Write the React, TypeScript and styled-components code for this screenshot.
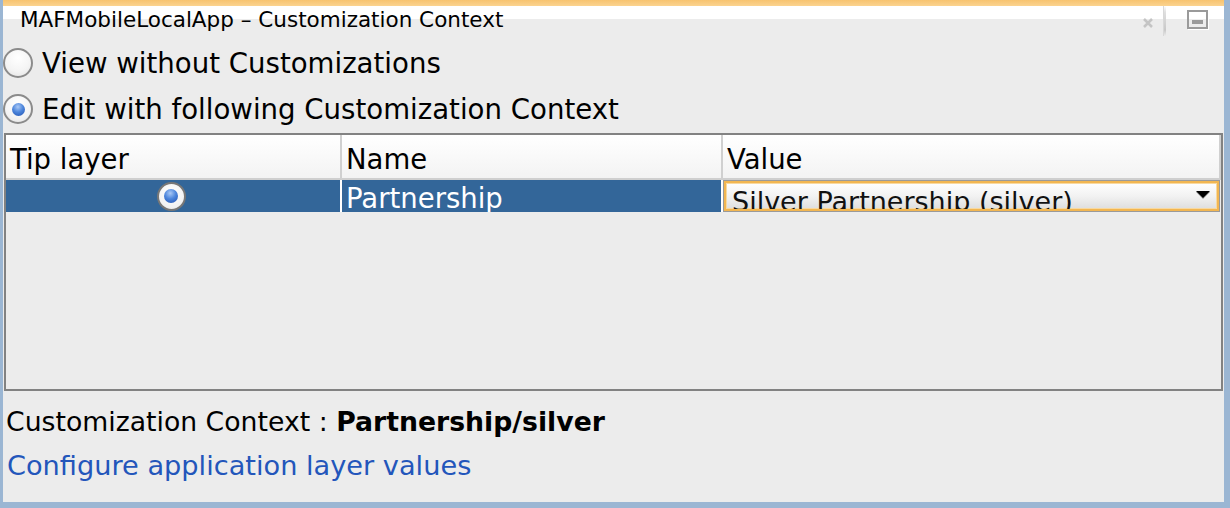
import React from "react";
import styled, { createGlobalStyle } from "styled-components";

const Global = createGlobalStyle`
  html, body { margin: 0; padding: 0; background: #ececec; }
  * { box-sizing: border-box; }
`;

const Frame = styled.div`
  width: 1230px;
  height: 508px;
  display: flex;
  flex-direction: column;
  background: #ececec;
  border-left: 3px solid #9bb6d3;
  border-right: 6px solid #9bb6d3;
  border-bottom: 6px solid #9bb6d3;
  font-family: "DejaVu Sans", "Liberation Sans", sans-serif;
  color: #000;
  overflow: hidden;
`;

const TopStripe = styled.div`
  height: 6px;
  flex: none;
  background: linear-gradient(#f7c36f, #fbd38f);
`;

const TitleBar = styled.div`
  height: 34px;
  flex: none;
  display: flex;
  align-items: flex-start;
  background: linear-gradient(#ffffff 0 13px, #ececec 13px);
  padding-left: 17px;
`;

const TitleText = styled.div`
  font-size: 21.5px;
  flex: 1;
  line-height: 26px;
  padding-top: 1px;
`;

const CloseMark = styled.div`
  width: 12px;
  height: 12px;
  margin-right: 9px;
  margin-top: 11px;
  display: flex;
`;

const Separator = styled.div`
  width: 3px;
  height: 30px;
  background: linear-gradient(#ffffff, #e0e0e0 20%, #c8c8c8 80%, #ececec);
  border-left: 1px solid #d8d8d8;
  margin-right: 21px;
`;

const MinButton = styled.div`
  width: 21px;
  height: 19px;
  border: 2px solid #9a9a9a;
  margin-right: 16px;
  margin-top: 4px;
  display: flex;
  align-items: flex-end;
  justify-content: center;
  padding-bottom: 3px;
  box-shadow: 1px 1px 0 #ffffff;
  &::after {
    content: "";
    width: 11px;
    height: 4px;
    background: #9a9a9a;
  }
`;

const OptionRow = styled.label`
  height: 46px;
  flex: none;
  display: flex;
  align-items: center;
  gap: 9px;
  font-size: 27.6px;
`;

const RadioCircle = styled.span<{ $on?: boolean }>`
  width: 30px;
  height: 30px;
  flex: none;
  border-radius: 50%;
  border: 2px solid #8b8b8b;
  background: radial-gradient(circle at 50% 30%, #ffffff 0%, #f4f4f4 60%, #e2e2e2 100%);
  display: flex;
  align-items: center;
  justify-content: center;
  &::after {
    content: "";
    display: ${(p) => (p.$on ? "block" : "none")};
    width: 13px;
    height: 13px;
    border-radius: 50%;
    background: radial-gradient(circle at 45% 30%, #a9c8f5 0%, #4d86dc 45%, #1f4fae 100%);
  }
`;

const TableBox = styled.div`
  margin: 1px 1px 0 1px;
  height: 258px;
  flex: none;
  border: 2px solid #828282;
  display: flex;
  flex-direction: column;
  background: #ececec;
`;

const Grid = styled.div`
  display: grid;
  grid-template-columns: 336px 381px 1fr;
`;

const HeadCell = styled.div`
  height: 45px;
  background: linear-gradient(#ffffff, #f3f3f3);
  border-bottom: 2px solid #cfcfcf;
  border-right: 2px solid #d0d0d0;
  font-size: 27.5px;
  display: flex;
  align-items: center;
  padding-left: 4px;
  padding-top: 5px;
  &:last-child { border-right: none; }
`;

const BodyCell = styled.div<{ $center?: boolean }>`
  height: 32px;
  background: #336699;
  color: #ffffff;
  border-right: 2px solid #ffffff;
  font-size: 27.5px;
  display: flex;
  align-items: center;
  justify-content: ${(p) => (p.$center ? "center" : "flex-start")};
  padding-left: ${(p) => (p.$center ? "0" : "4px")};
  padding-top: 3px;
  overflow: hidden;
`;

const TableRadio = styled.span`
  width: 29px;
  height: 29px;
  border-radius: 50%;
  border: 2px solid #777;
  background: radial-gradient(circle at 50% 35%, #ffffff 0%, #f2f2f2 70%, #dcdcdc 100%);
  display: flex;
  align-items: center;
  justify-content: center;
  margin-top: -3px;
  margin-right: 4px;
  &::after {
    content: "";
    width: 14px;
    height: 14px;
    border-radius: 50%;
    background: radial-gradient(circle at 45% 30%, #a9c8f5 0%, #4d86dc 45%, #1f4fae 100%);
  }
`;

const ComboCell = styled.div`
  height: 32px;
  border: 1px solid #9a9a9a;
  background: #ececec;
  display: flex;
  margin-right: 1px;
`;

const Combo = styled.div`
  flex: 1;
  border: 2px solid #f2b651;
  box-shadow: inset 0 0 0 1px #f8d9a0;
  background: linear-gradient(#ffffff, #f2f2f2 50%, #dedede);
  display: flex;
  align-items: flex-end;
  overflow: hidden;
  padding-left: 6px;
`;

const ComboText = styled.div`
  font-size: 27px;
  line-height: 27px;
  height: 24px;
  flex: 1;
  margin-bottom: -3px;
  align-self: flex-end;
  overflow: hidden;
  white-space: nowrap;
  color: #111;
`;

const Arrow = styled.div`
  align-self: center;
  margin-right: 7px;
  margin-top: -4px;
  width: 0;
  height: 0;
  border-left: 7px solid transparent;
  border-right: 7px solid transparent;
  border-top: 7px solid #000;
  filter: drop-shadow(0 1px 0 #9a9a9a);
`;

const Footer = styled.div`
  display: flex;
  flex-direction: column;
  padding-left: 3px;
  padding-top: 8px;
`;

const ContextLine = styled.div`
  font-size: 26.7px;
  height: 44px;
  display: flex;
  align-items: center;
  white-space: pre;
  b { font-weight: bold; }
`;

const Link = styled.a`
  font-size: 27.2px;
  color: #2356bb;
  text-decoration: none;
  height: 44px;
  display: flex;
  align-items: center;
  padding-left: 1px;
  cursor: pointer;
`;

export default function App() {
  return (
    <>
      <Global />
      <Frame>
        <TopStripe />
        <TitleBar>
          <TitleText>MAFMobileLocalApp – Customization Context</TitleText>
          <CloseMark>
            <svg width="12" height="12" viewBox="0 0 12 12">
              <path d="M2 2 L10 10 M10 2 L2 10" stroke="#c4c4c4" strokeWidth="2.5" />
            </svg>
          </CloseMark>
          <Separator />
          <MinButton />
        </TitleBar>
        <OptionRow>
          <RadioCircle />
          View without Customizations
        </OptionRow>
        <OptionRow>
          <RadioCircle $on />
          Edit with following Customization Context
        </OptionRow>
        <TableBox>
          <Grid>
            <HeadCell>Tip layer</HeadCell>
            <HeadCell>Name</HeadCell>
            <HeadCell>Value</HeadCell>
            <BodyCell $center>
              <TableRadio />
            </BodyCell>
            <BodyCell>Partnership</BodyCell>
            <ComboCell>
              <Combo>
                <ComboText>Silver Partnership (silver)</ComboText>
                <Arrow />
              </Combo>
            </ComboCell>
          </Grid>
        </TableBox>
        <Footer>
          <ContextLine>
            Customization Context : <b>Partnership/silver</b>
          </ContextLine>
          <Link>Configure application layer values</Link>
        </Footer>
      </Frame>
    </>
  );
}
